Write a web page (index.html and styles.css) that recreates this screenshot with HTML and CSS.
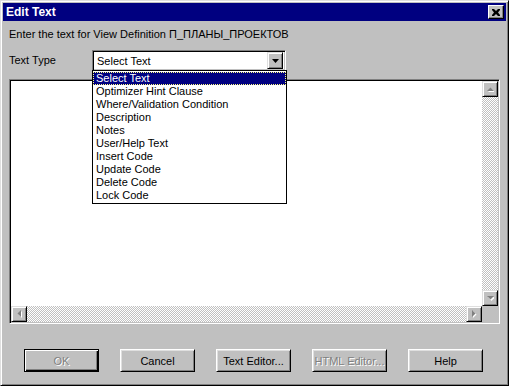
FILE: index.html
```html
<!DOCTYPE html>
<html lang="en">
<head>
  <meta charset="UTF-8" />
  <title>Edit Text</title>
  <link rel="stylesheet" href="styles.css">
</head>
<body>

<div class="window">
  <div class="titlebar">
    <span class="title">Edit Text</span>
    <span class="close">
      <svg width="8" height="7" viewBox="0 0 8 7"><path d="M0 0h2l2 2 2-2h2v1L6 3.5 8 6v1H6L4 5 2 7H0V6l2-2.5L0 1z" fill="#000"/></svg>
    </span>
  </div>

  <div class="content">
    <p class="prompt">Enter the text for View Definition П_ПЛАНЫ_ПРОЕКТОВ</p>

    <div class="type-row">
      <span class="type-label">Text Type</span>
      <div class="combo">
        <div class="combo-field">
          <span class="combo-value">Select Text</span>
          <span class="combo-btn">
            <svg width="7" height="4" viewBox="0 0 7 4"><path d="M0 0h7L3.5 4z" fill="#000"/></svg>
          </span>
        </div>
        <ul class="combo-list">
          <li class="selected">Select Text</li>
          <li>Optimizer Hint Clause</li>
          <li>Where/Validation Condition</li>
          <li>Description</li>
          <li>Notes</li>
          <li>User/Help Text</li>
          <li>Insert Code</li>
          <li>Update Code</li>
          <li>Delete Code</li>
          <li>Lock Code</li>
        </ul>
      </div>
    </div>

    <div class="editor">
      <div class="editor-text"></div>
      <div class="vscroll">
        <span class="sbtn">
          <svg width="7" height="5" viewBox="0 0 7 5"><path d="M1 5h7L4.5 1.5z" fill="#fff"/><path d="M0 4h7L3.5 0.5z" fill="#808080"/></svg>
        </span>
        <span class="track"></span>
        <span class="sbtn">
          <svg width="7" height="5" viewBox="0 0 7 5"><path d="M1 1h7L4.5 5z" fill="#fff"/><path d="M0 0h7L3.5 3.5z" fill="#808080"/></svg>
        </span>
      </div>
      <div class="hscroll">
        <span class="sbtn">
          <svg width="5" height="8" viewBox="0 0 5 8"><path d="M5 1v7L1.5 4.5z" fill="#fff"/><path d="M4 0v7L0.5 3.5z" fill="#808080"/></svg>
        </span>
        <span class="track"></span>
        <span class="sbtn">
          <svg width="5" height="8" viewBox="0 0 5 8"><path d="M1 1v7L4.5 4.5z" fill="#fff"/><path d="M0 0v7L3.5 3.5z" fill="#808080"/></svg>
        </span>
      </div>
      <div class="corner"></div>
    </div>
  </div>

  <div class="buttons">
    <span class="btn default disabled">OK</span>
    <span class="btn">Cancel</span>
    <span class="btn">Text Editor...</span>
    <span class="btn disabled">HTML Editor...</span>
    <span class="btn">Help</span>
  </div>
</div>

</body>
</html>
```

FILE: styles.css
```css
* { margin: 0; padding: 0; box-sizing: border-box; }
html, body {
  width: 509px;
  height: 386px;
  overflow: hidden;
  background: #c0c0c0;
  font-family: "Liberation Sans", Arial, sans-serif;
  font-size: 11px;
  color: #000;
}

.window {
  width: 509px;
  height: 386px;
  padding: 2px;
  background: #c0c0c0;
  border: 1px solid;
  border-color: #dfdfdf #000 #000 #dfdfdf;
  box-shadow: inset 1px 1px #fff, inset -1px -1px #808080;
}

/* title bar */
.titlebar {
  height: 18px;
  background: #000080;
  display: flex;
  align-items: center;
  justify-content: space-between;
  padding: 0 2px 0 3px;
}
.title {
  color: #fff;
  font-weight: bold;
  font-size: 12px;
}
.close {
  width: 16px;
  height: 14px;
  background: #c0c0c0;
  border: 1px solid;
  border-color: #fff #000 #000 #fff;
  box-shadow: inset -1px -1px #808080;
  display: flex;
  align-items: center;
  justify-content: center;
}

/* main area */
.content {
  padding: 0 5px 0 6px;
}
.prompt {
  margin-top: 7px;
  line-height: 13px;
}

.type-row {
  display: flex;
  align-items: center;
  margin-top: 9px;
}
.type-label {
  width: 83px;
  line-height: 13px;
}

.combo {
  position: relative;
  width: 194px;
  height: 21px;
}
.combo-field {
  height: 21px;
  display: flex;
  align-items: center;
  background: #fff;
  border: 1px solid;
  border-color: #808080 #fff #fff #808080;
  box-shadow: inset 1px 1px #000, inset -1px -1px #c0c0c0;
  padding: 1px 2px 1px 1px;
}
.combo-value {
  flex: 1;
  padding-left: 3px;
}
.combo-btn {
  width: 16px;
  height: 17px;
  background: #c0c0c0;
  border: 1px solid;
  border-color: #dfdfdf #000 #000 #dfdfdf;
  box-shadow: inset 1px 1px #fff, inset -1px -1px #808080;
  display: flex;
  align-items: center;
  justify-content: center;
}

.combo-list {
  position: absolute;
  top: 20px;
  left: 0;
  width: 195px;
  list-style: none;
  background: #fff;
  border: 1px solid #000;
  padding: 1px 0;
  z-index: 10;
}
.combo-list li {
  height: 13px;
  line-height: 13px;
  padding-left: 3px;
}
.combo-list li.selected {
  background: #000080;
  color: #fff;
  outline: 1px dotted #ffff80;
  outline-offset: -1px;
}

/* text box with scroll bars */
.editor {
  margin-top: 8px;
  width: 491px;
  height: 245px;
  display: grid;
  grid-template-columns: 1fr 16px;
  grid-template-rows: 1fr 16px;
  background: #fff;
  border: 1px solid;
  border-color: #808080 #fff #fff #808080;
  box-shadow: inset 1px 1px #000, inset -1px -1px #c0c0c0;
  padding: 1px;
}
.vscroll, .hscroll {
  display: flex;
}
.vscroll { flex-direction: column; }
.track {
  flex: 1;
  background: repeating-conic-gradient(#fff 0 25%, #c0c0c0 0 50%) 0 0 / 2px 2px;
}
.sbtn {
  width: 16px;
  height: 16px;
  background: #c0c0c0;
  border: 1px solid;
  border-color: #dfdfdf #000 #000 #dfdfdf;
  box-shadow: inset 1px 1px #fff, inset -1px -1px #808080;
  display: flex;
  align-items: center;
  justify-content: center;
}
.corner { background: #c0c0c0; }

/* buttons */
.buttons {
  display: flex;
  gap: 21px;
  margin-top: 25px;
  padding-left: 21px;
}
.btn {
  width: 75px;
  height: 23px;
  display: flex;
  align-items: center;
  justify-content: center;
  background: #c0c0c0;
  border: 1px solid;
  border-color: #fff #000 #000 #fff;
  box-shadow: inset 1px 1px #dfdfdf, inset -1px -1px #808080;
}
.btn.default {
  border-color: #000;
  box-shadow: inset 1px 1px #fff, inset -1px -1px #000, inset -2px -2px #808080;
}
.btn.disabled {
  color: #808080;
  text-shadow: 1px 1px #fff;
}
```
